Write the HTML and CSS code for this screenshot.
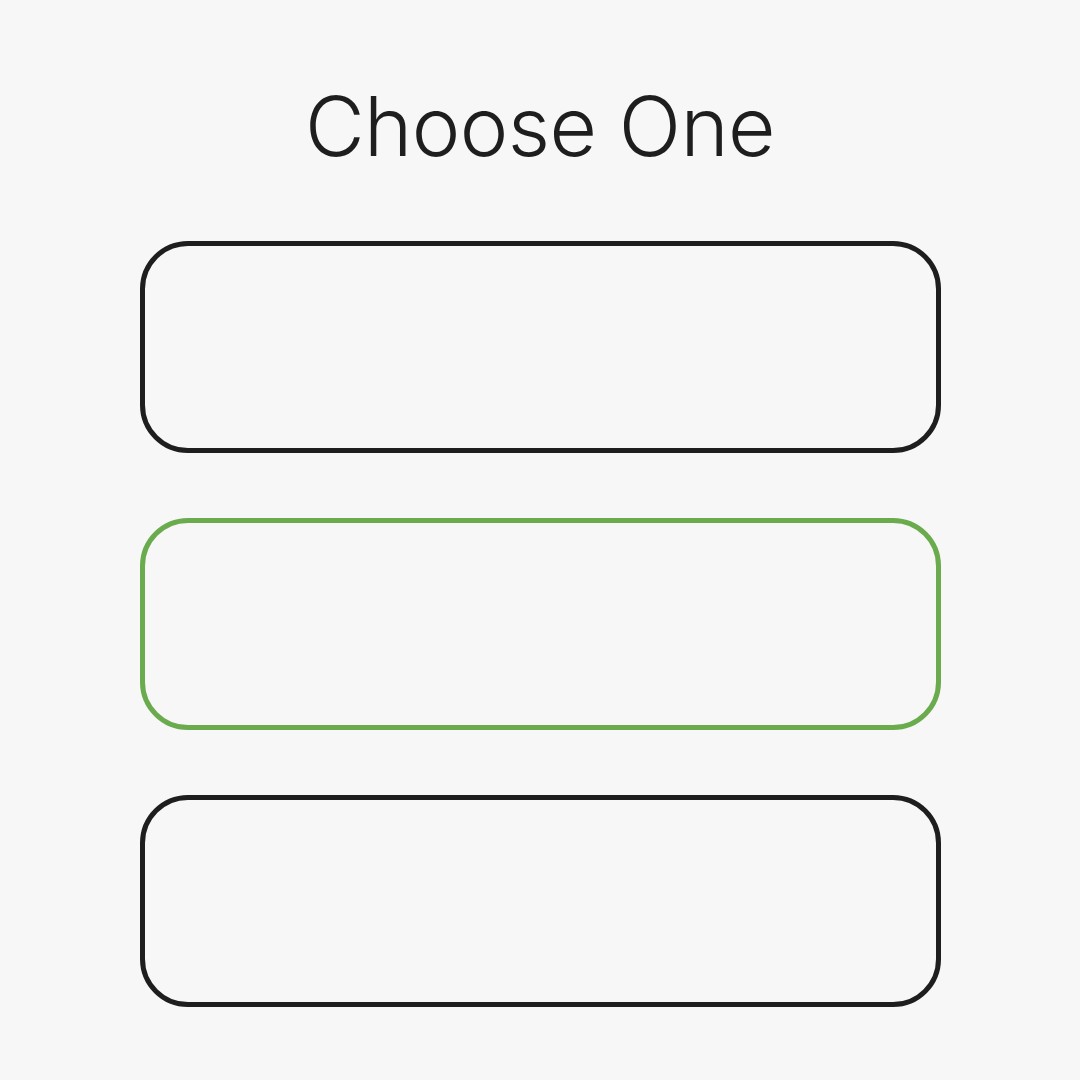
FILE: index.html
```html
<!DOCTYPE html>
<html lang="en">
<head>
<meta charset="utf-8">
<title>Choose One</title>
<link rel="stylesheet" href="styles.css">
</head>
<body>
<main class="page">
  <h1 class="title">Choose One</h1>
  <div class="options">
    <div class="option"></div>
    <div class="option option--selected"></div>
    <div class="option"></div>
  </div>
</main>
</body>
</html>
```
FILE: styles.css
```css
html, body {
  margin: 0;
  padding: 0;
  background: #f7f7f7;
}
.page {
  width: 1080px;
  height: 1080px;
  box-sizing: border-box;
  padding-top: 86px;
  display: flex;
  flex-direction: column;
  align-items: center;
}
.title {
  margin: 0;
  font-family: "Inter", "Liberation Sans", sans-serif;
  font-weight: 300;
  font-size: 82px;
  line-height: 82px;
  letter-spacing: -0.6px;
  color: #1e1e1e;
  text-align: center;
}
.options {
  margin-top: 73px;
  display: flex;
  flex-direction: column;
  gap: 65px;
}
.option {
  width: 801px;
  height: 212px;
  box-sizing: border-box;
  border: 5px solid #1e1e1e;
  border-radius: 48px;
}
.option--selected {
  border-color: #6aab4e;
}
```
